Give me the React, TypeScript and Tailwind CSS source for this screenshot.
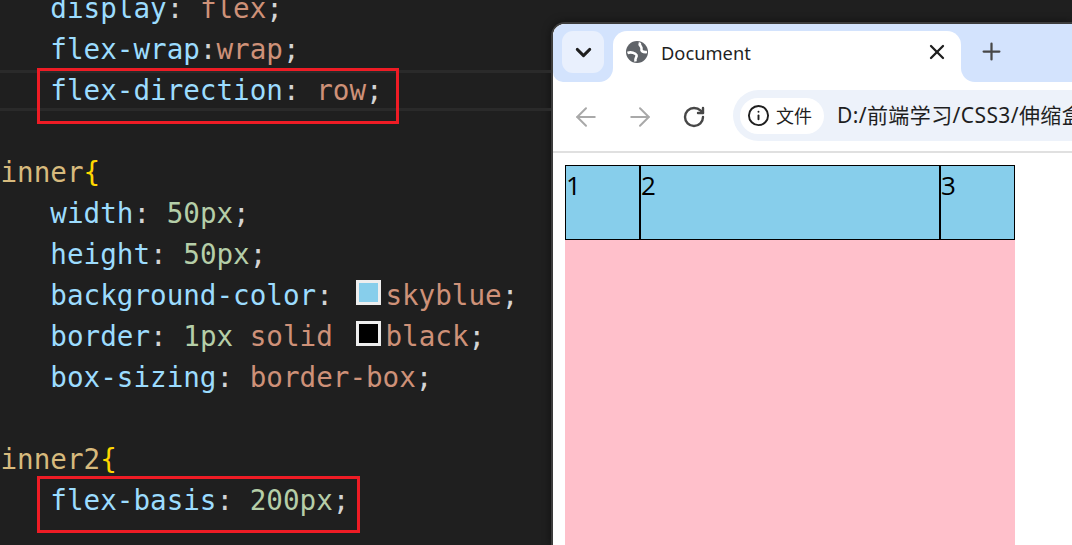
import React from 'react';
import { ArrowLeft, ArrowRight, ChevronDown, Info, Plus, RotateCw, X } from 'lucide-react';

const Prop = ({ children }: { children: React.ReactNode }) => <span className="text-[#9cdcfe]">{children}</span>;
const Val = ({ children }: { children: React.ReactNode }) => <span className="text-[#ce9178]">{children}</span>;
const Num = ({ children }: { children: React.ReactNode }) => <span className="text-[#b5cea8]">{children}</span>;
const Sel = ({ children }: { children: React.ReactNode }) => <span className="text-[#d7ba7d]">{children}</span>;
const Brace = () => <span className="text-[#ffd700]">{'{'}</span>;

const Swatch = ({ color }: { color: string }) => (
  <span className="inline-flex w-[36px] h-[41px] pl-[7px] pb-[6px] items-center align-top">
    <span className={`block w-[25px] h-[25px] border-[3px] border-[#eeeeee] ${color}`} />
  </span>
);

const Line = ({ children, className = 'leading-[41px]' }: { children?: React.ReactNode; className?: string }) => (
  <div className={`relative h-[41px] box-border whitespace-pre pl-[0.5px] ${className}`}>{children}</div>
);

const Editor = () => (
  <div className="w-[551px] shrink-0 -mt-[12px] text-[27.6px] text-[#d4d4d4] font-['DejaVu_Sans_Mono',monospace]">
    <Line>   <Prop>display</Prop>: <Val>flex</Val>;</Line>
    <Line>   <Prop>flex-wrap</Prop>:<Val>wrap</Val>;</Line>
    <Line className="border-y-[3px] border-[#2a2a2a] leading-[35px]">
      {'   '}<Prop>flex-direction</Prop>: <Val>row</Val>;
      <div className="absolute left-[37px] -top-[5px] w-[362px] h-[56px] border-[3px] border-[#ee1c25]" />
    </Line>
    <Line />
    <Line><Sel>inner</Sel><Brace /></Line>
    <Line>   <Prop>width</Prop>: <Num>50px</Num>;</Line>
    <Line>   <Prop>height</Prop>: <Num>50px</Num>;</Line>
    <Line>   <Prop>background-color</Prop>: <Swatch color="bg-[#87ceeb]" /><Val>skyblue</Val>;</Line>
    <Line>   <Prop>border</Prop>: <Num>1px</Num> <Val>solid</Val> <Swatch color="bg-black" /><Val>black</Val>;</Line>
    <Line>   <Prop>box-sizing</Prop>: <Val>border-box</Val>;</Line>
    <Line />
    <Line><Sel>inner2</Sel><Brace /></Line>
    <Line>
      {'   '}<Prop>flex-basis</Prop>: <Num>200px</Num>;
      <div className="absolute left-[37px] -top-[4px] w-[323px] h-[57px] border-[3px] border-[#ee1c25]" />
    </Line>
  </div>
);

const GlobeIcon = () => (
  <svg width="22" height="22" viewBox="0 0 22 22" className="shrink-0" fill="none">
    <circle cx="11" cy="11" r="11" fill="#5f6368" />
    <path d="M14 1.5 C12.5 4.5 16 5.5 15.5 7.5 C15 10 16.5 11.5 21 11" stroke="#ffffff" strokeWidth="2.6" />
    <path d="M1.5 12 C5 10.5 9.5 12 10.5 14 C11.5 16 8.5 17 9.5 20.5" stroke="#ffffff" strokeWidth="2.6" />
  </svg>
);

const Browser = () => (
  <div className="flex-1 mt-[22px] flex flex-col bg-white border-l-2 border-t-2 border-[#3c3c3c] rounded-tl-[14px] overflow-hidden shadow-[0_0_8px_rgba(0,0,0,0.5)] font-['Noto_Sans','Noto_Sans_CJK_SC',sans-serif]">
    {/* Tab strip */}
    <div className="flex h-[58px] shrink-0 bg-white">
      <div className="w-[60px] shrink-0 bg-[#d3e3fd] rounded-br-[14px] rounded-bl-[10px] pt-[7px] pl-[9px]">
        <div className="w-[42px] h-[42px] rounded-[11px] bg-[#e9f0fd] flex items-center justify-center">
          <ChevronDown className="w-[25px] h-[25px] text-[#1f1f1f]" strokeWidth={2.8} />
        </div>
      </div>
      <div className="w-[348px] shrink-0 bg-[#d3e3fd] pt-[7px]">
        <div className="h-full bg-white rounded-t-[14px] flex items-start pt-[10px] pl-[13px] pr-[12px]">
          <GlobeIcon />
          <span className="ml-[13px] mt-[1px] text-[18.3px] leading-[22px] text-[#1f1f1f]">Document</span>
          <X className="ml-auto -mt-[1px] w-[24px] h-[24px] text-[#1f1f1f]" strokeWidth={2.3} />
        </div>
      </div>
      <div className="flex-1 bg-[#d3e3fd] rounded-bl-[14px] pt-[14px] pl-[17px]">
        <Plus className="w-[27px] h-[27px] text-[#474747]" strokeWidth={2} />
      </div>
    </div>
    {/* Toolbar */}
    <div className="h-[71px] shrink-0 flex items-center border-b-2 border-[#e0e0e0] pl-[18px]">
      <ArrowLeft className="w-[30px] h-[30px] text-[#a9a9a9]" strokeWidth={1.6} />
      <ArrowRight className="ml-[24px] w-[30px] h-[30px] text-[#a9a9a9]" strokeWidth={1.6} />
      <RotateCw className="ml-[27px] w-[24px] h-[24px] text-[#474747]" strokeWidth={2.4} />
      <div className="ml-[27px] flex-1 h-[51px] -mt-[2px] rounded-l-full bg-[#edf2fa] flex items-center pl-[7px] whitespace-nowrap overflow-hidden">
        <div className="w-[84px] h-[36px] shrink-0 rounded-full bg-white flex items-center pl-[7px] gap-[6px]">
          <Info className="w-[23px] h-[23px] text-[#1f1f1f]" strokeWidth={2} />
          <span className="text-[18px] leading-none text-[#1f1f1f]">文件</span>
        </div>
        <span className="ml-[13px] text-[21px] tracking-[0.4px] leading-none text-[#1f1f1f]">D:/前端学习/CSS3/伸缩盒</span>
      </div>
    </div>
    {/* Page */}
    <div className="flex-1 pt-[12px] pl-[12px]">
      <div className="w-[450px] h-full bg-[#ffc0cb] flex items-start text-[26px] leading-[38px] text-black font-['Open_Sans',sans-serif]">
        <div className="w-[75px] h-[75px] border border-black bg-[#87ceeb]">1</div>
        <div className="w-[300px] h-[75px] border border-black bg-[#87ceeb]">2</div>
        <div className="w-[75px] h-[75px] border border-black bg-[#87ceeb]">3</div>
      </div>
    </div>
  </div>
);

export default function App() {
  return (
    <div className="w-[1072px] h-[545px] overflow-hidden flex bg-[#1f1f1f]">
      <Editor />
      <Browser />
    </div>
  );
}
